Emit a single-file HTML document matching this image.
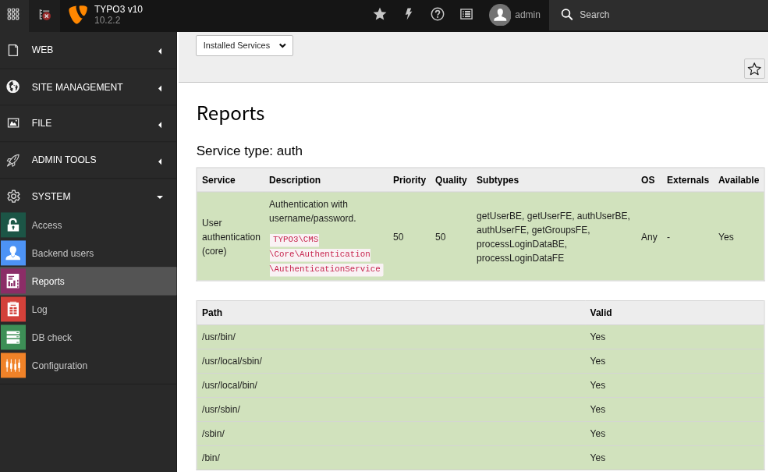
<!DOCTYPE html>
<html lang="en">
<head>
<meta charset="utf-8">
<title>TYPO3 CMS - Reports</title>
<style>
*{box-sizing:border-box;margin:0;padding:0}
html,body{width:768px;height:472px;overflow:hidden;background:#fff}
#page{background:#151515;position:absolute;left:0;top:0;width:984.62px;height:605.13px;transform:scale(0.78);transform-origin:0 0;overflow:hidden;will-change:transform}
body{font-family:"Liberation Sans",Arial,sans-serif;font-size:12px;color:#000;position:relative;line-height:1.5}
.abs{position:absolute}
/* topbar */
#topbar{z-index:2;position:absolute;left:0;top:0;width:984.62px;height:40.6px;background:#151515}
#topbar svg{position:absolute}
.ti{width:18px;height:18px}
#logo{left:85.2px;top:4.1px;width:29.84px;height:29.84px}
#avatar{left:626.7px;top:4.8px;width:28.6px;height:28.6px}
#tb1{position:absolute;left:0;top:0;width:37.4px;height:40.6px;background:#292929}
#tb2{position:absolute;left:37.4px;top:0;width:39.8px;height:40.6px;background:#1e1e1e}
#site{position:absolute;left:121px;top:4.66px;color:#fff;font-size:12px;line-height:14.4px;white-space:nowrap}
#site .ver{color:#8c8c8c;display:block}
#search{position:absolute;left:704px;top:0;width:281px;height:38.9px;background:#2d2d2d}
#search span{position:absolute;left:39.3px;top:9.5px;color:#cfcfcf;font-size:12px;line-height:18px}
#admin{position:absolute;left:660.25px;top:9.8px;color:#a5a5a5;font-size:12px;line-height:18px}
/* sidebar */
#side{box-shadow:0.45px 0 0 #292929;position:absolute;left:0;top:40px;width:225.76px;height:565.38px;background:#292929}
.grp{position:absolute;left:0;width:225.76px;height:47px;border-top:1px solid #202020;color:#fff;font-size:12.1px}
.gi{position:absolute;left:9.2px;top:15.6px;width:16px;height:16px}
.grp .lbl{position:absolute;left:40.78px;top:14.3px;line-height:18px;white-space:nowrap}
.sub{position:absolute;left:0;width:225.76px;height:36px;color:#c6c6c6;font-size:12px}
.sub .lbl{position:absolute;left:40.78px;top:9.7px;line-height:18px;white-space:nowrap}
.sub .ic{position:absolute;left:1.3px;top:2px;width:32.1px;height:32.1px}
.sub .ic svg{position:absolute;left:0;top:0;width:100%;height:100%}
.ic0{background:#1c5546}.ic1{background:#4d93f5}.ic2{background:#8b2d67}.ic3{background:#d3413a}.ic4{background:#3d8f56}.ic5{background:#f08228}
.sub.act{background:#545454;color:#fff;box-shadow:0.45px 0 0 #545454}
.caretl{position:absolute;left:203.02px;top:20.6px;width:0;height:0;border-top:4.1px solid transparent;border-bottom:4.1px solid transparent;border-right:4.6px solid #fff}
.caretd{position:absolute;left:201.13px;top:22.3px;width:0;height:0;border-left:4.3px solid transparent;border-right:4.3px solid transparent;border-top:4.5px solid #fff}
/* content */
#content{position:absolute;left:227px;top:41px;width:757.7px;height:565.38px;background:#fff}
#doch{position:absolute;left:2px;top:0;right:0;height:65px;background:#eee;border-bottom:1px solid #c3c3c3}
#sel svg{position:absolute;left:104.6px;top:6.8px;width:10.6px;height:10.6px}
#sel{position:absolute;left:22.26px;top:3.9px;width:124.35px;height:26.9px;padding-top:1.25px;background:#fff;border:1px solid #bbb;border-radius:2.06px;font-size:10.9px;line-height:23.14px;padding-left:8.5px;color:#222}
#starbtn{position:absolute;left:725px;top:33.9px;width:26.8px;height:26px;background:#eee;border:1px solid #c8c8c8;border-radius:2px}
#starbtn svg{position:absolute;left:2.8px;top:2.7px;width:18.4px;height:18.4px}
h1{position:absolute;left:24.65px;top:84.62px;font-family:"Noto Sans CJK SC","Liberation Sans",sans-serif;font-weight:400;font-size:24.2px;line-height:35.9px;color:#000;white-space:nowrap}
h2{position:absolute;left:24.65px;top:141.03px;font-weight:400;font-size:17.05px;line-height:23.14px;color:#000;white-space:nowrap}
table{transform:translate(0.5px,0);position:absolute;border-collapse:collapse;font-size:12px;line-height:18px;color:#000}
th{text-align:left;font-weight:700;white-space:nowrap}
td,th{padding:6px 5.4px 6px 6.6px;vertical-align:middle;border-top:1px solid #d4d4d4}
table{border:1px solid #d0d0d0;border-collapse:separate;border-spacing:0;border-top:0}
table{background:linear-gradient(#ededed 0,#ededed 31px,#d1e2bd 31px,#d1e2bd 100%)}
td{color:#1c1c1c}
td p{margin:0 0 9px 0}
td p.last{margin:0;white-space:nowrap}
.nw{white-space:nowrap}
code{font-family:"Liberation Mono",monospace;font-size:10.8px;color:#c7254e;background:#f9f2f4;padding:1.8px 4px 2.9px;margin-left:0.9px;border-radius:2px;line-height:18px}
</style>
</head>
<body>
<div id="page">
<div id="topbar">
  <div id="tb1"><svg viewBox="0 0 16 16" style="left:9.1px;top:10.1px;width:16px;height:16px"><g fill="none" stroke="#dadada" stroke-width="1.15"><rect x="1.20" y="1.20" width="3.2" height="3.2" rx="0.7"/><rect x="6.40" y="1.20" width="3.2" height="3.2" rx="0.7"/><rect x="11.60" y="1.20" width="3.2" height="3.2" rx="0.7"/><rect x="1.20" y="6.40" width="3.2" height="3.2" rx="0.7"/><rect x="6.40" y="6.40" width="3.2" height="3.2" rx="0.7"/><rect x="11.60" y="6.40" width="3.2" height="3.2" rx="0.7"/><rect x="1.20" y="11.60" width="3.2" height="3.2" rx="0.7"/><rect x="6.40" y="11.60" width="3.2" height="3.2" rx="0.7"/><rect x="11.60" y="11.60" width="3.2" height="3.2" rx="0.7"/></g></svg></div>
  <div id="tb2"><svg viewBox="0 0 20 20" style="left:9.5px;top:8.5px;width:20px;height:20px"><g stroke="#b4b4b4" stroke-width="1.3" fill="none"><path d="M4.4 3 V15.6"/><path d="M4.4 4.4 H7 M4.4 8 H7 M4.4 11.6 H7 M4.4 15 H7"/></g><rect x="8.2" y="4.3" width="8" height="2" fill="#8c8c8c"/><circle cx="12.7" cy="11.6" r="5.3" fill="#982b2b"/><path d="M10.6 9.5 L14.8 13.7 M14.8 9.5 L10.6 13.7" stroke="#dcdcdc" stroke-width="1.5" fill="none"/></svg></div>
  <svg id="logo" viewBox="0 0 16 16"><path fill="#ff8700" d="M11.1 10.3c-.2 0-.3.1-.5.1-1.600 0-3.900-5.500-3.900-7.400 0-.7.200-.9.400-1.100-2 .2-4.300.9-5 1.800-.2.300-.3.600-.3 1.100C1.800 7.700 5 14.200 7.200 14.200c1 0 2.800-1.700 3.900-3.900M10.300 1.800c2 0 4.100.3 4.100 1.500 0 2.400-1.500 5.400-2.300 5.400-1.400 0-3.200-3.900-3.200-5.900 0-.9.300-1 1.400-1"/></svg>
  <div id="site">TYPO3 v10<span class="ver">10.2.2</span></div>
  <svg class="ti" viewBox="0 0 18 18" style="left:477.8px;top:9.3px"><polygon points="9.00,0.50 11.35,6.16 17.46,6.65 12.80,10.64 14.23,16.60 9.00,13.40 3.77,16.60 5.20,10.64 0.54,6.65 6.65,6.16" fill="#c6c6c6"/></svg>
  <svg class="ti" viewBox="0 0 18 18" style="left:515px;top:9.2px"><path d="M7.6 1.6 L12.2 1.6 L10.4 6.2 L13.4 5.6 L6.6 16.6 L8.2 9.2 L4.8 10 Z" fill="#c6c6c6"/></svg>
  <svg class="ti" viewBox="0 0 18 18" style="left:552px;top:9.1px"><circle cx="9" cy="9" r="7.7" fill="none" stroke="#c6c6c6" stroke-width="1.5"/><path d="M6.6 7.2 C6.6 5.4 7.6 4.6 9.1 4.6 C10.6 4.6 11.5 5.5 11.5 6.8 C11.5 8.6 9.1 8.6 9.1 10.8" fill="none" stroke="#c6c6c6" stroke-width="1.7"/><rect x="8.2" y="12" width="1.8" height="1.8" fill="#c6c6c6"/></svg>
  <svg class="ti" viewBox="0 0 18 18" style="left:589.2px;top:8.95px"><rect x="1.9" y="2.9" width="14.2" height="12.2" fill="none" stroke="#c6c6c6" stroke-width="1.4"/><g fill="#c6c6c6"><rect x="4.2" y="5.2" width="1.5" height="1.6"/><rect x="4.2" y="8.2" width="1.5" height="1.6"/><rect x="4.2" y="11.2" width="1.5" height="1.6"/><rect x="7" y="5" width="7" height="2.1"/><rect x="7" y="8" width="7" height="2.1"/><rect x="7" y="11" width="7" height="2.1"/></g></svg>
  <svg id="avatar" viewBox="0 0 32 32"><circle cx="16" cy="16" r="16" fill="#737373"/><path d="M16 6.8 C13.2 6.8 12 8.8 12 11.6 C12 13.6 12.8 15.4 13.9 16.4 L13.7 18.2 C11.4 19 8.6 19.8 7.6 21.2 C7.1 22 7 23.2 7 24.4 L25 24.4 C25 23.2 24.9 22 24.4 21.2 C23.4 19.800 20.600 19 18.300 18.200 L18.100 16.400 C19.200 15.400 20 13.600 20 11.600 C20 8.800 18.800 6.800 16 6.800 Z" fill="#fff"/></svg>
  <div id="admin">admin</div>
  <div id="search"><svg viewBox="0 0 20 20" style="position:absolute;left:12.2px;top:7.2px;width:20px;height:20px"><circle cx="9.5" cy="10" r="4.9" fill="none" stroke="#fff" stroke-width="1.7"/><path d="M13.1 13.6 L17.2 17.700" stroke="#fff" stroke-width="2" stroke-linecap="round"/></svg><span>Search</span></div>
</div>
<div id="side">
  <div class="grp" style="top:0;transform:translateY(0.63px);border-top:0"><svg class="gi" viewBox="0 0 16 16"><path d="M2.4 0.9 H11.1 L13.4 3.2 V14.7 H2.4 Z" fill="none" stroke="#dcdcdc" stroke-width="1.35" stroke-linejoin="round"/><path d="M10.7 1.1 V3.6 H13.2" fill="none" stroke="#dcdcdc" stroke-width="1.1"/></svg><span class="lbl">WEB</span><i class="caretl"></i></div>
  <div class="grp" style="top:0;transform:translateY(47.50px)"><svg class="gi" viewBox="0 0 16 16" style="left:8.1px;top:14.05px;width:17.2px;height:17.2px"><circle cx="8" cy="8" r="7.7" fill="#f4f4f4"/><path d="M6.6 1.6 C4.6 2.6 3.2 4.4 3.4 6.2 L4.6 6.8 L3.8 8.4 L5 10 L4.6 11.6 L6.4 13.6 L7.6 13.4 L7.2 11.8 L8.4 10.8 L7 9.6 L5.8 9.4 L5.6 7.6 L6.8 6 L8.2 5.8 L8.6 4.4 L7.4 3.6 L8 2.2 Z" fill="#292929"/><path d="M12.4 5.6 L13.8 8.2 L12.6 11.4 L11 13 L11.4 10.4 L10.6 8.6 L11.6 7.6 Z" fill="#292929"/><path d="M8.8 6.2 L11 6.6 L10.8 7.2 L8.8 7 Z" fill="#292929"/></svg><span class="lbl">SITE MANAGEMENT</span><i class="caretl"></i></div>
  <div class="grp" style="top:0;transform:translateY(94.37px)"><svg class="gi" viewBox="0 0 16 16" style="top:14.3px"><rect x="1.5" y="2.7" width="13.2" height="10.8" fill="none" stroke="#e0e0e0" stroke-width="1.3"/><path d="M3.4 11.6 L5.4 6.8 L6.6 6.2 L8 9.2 L9.4 8 L10.6 8.4 L12.4 11.6 Z" fill="#fff"/><circle cx="11.8" cy="5.400" r="0.900" fill="#fff"/></svg><span class="lbl">FILE</span><i class="caretl"></i></div>
  <div class="grp" style="top:0;transform:translateY(141.24px)"><svg class="gi" viewBox="0 0 16 16" style="left:8.3px;top:14.5px;width:17.2px;height:17.2px"><g fill="none" stroke="#d0d0d0" stroke-width="1.05" stroke-linejoin="round" stroke-linecap="round"><path d="M15 1 C11.5 1.2 8.2 3 5.6 6.6 L4 9.4 L6.6 12 L9.4 10.4 C13 7.8 14.8 4.5 15 1 Z"/><path d="M6.2 6 L2.6 6 L1.2 8.4 L4.2 9"/><path d="M10 9.8 L10 13.4 L7.6 14.8 L7 11.8"/><path d="M4.2 10.4 L1.4 14.6 L5.6 11.8"/><path d="M11.6 3.2 L10 7"/></g></svg><span class="lbl">ADMIN TOOLS</span><i class="caretl"></i></div>
  <div class="grp" style="top:0;transform:translateY(188.11px)"><svg class="gi" viewBox="0 0 16 16" style="left:8.75px;top:14.3px;width:17px;height:17px"><path d="M6.41 0.88 L9.59 0.88 L9.90 3.05 L11.34 3.88 L13.37 3.06 L14.97 5.82 L13.23 7.17 L13.23 8.83 L14.97 10.18 L13.37 12.94 L11.34 12.12 L9.90 12.95 L9.59 15.12 L6.41 15.12 L6.10 12.95 L4.66 12.12 L2.63 12.94 L1.03 10.18 L2.77 8.83 L2.77 7.17 L1.03 5.82 L2.63 3.06 L4.66 3.88 L6.10 3.05Z" fill="none" stroke="#dcdcdc" stroke-width="1.25" stroke-linejoin="round"/><circle cx="8" cy="8" r="2.6" fill="none" stroke="#dcdcdc" stroke-width="1.25"/></svg><span class="lbl">SYSTEM</span><i class="caretd"></i></div>
  <div class="sub" style="top:0;transform:translateY(230.40px)"><span class="ic ic0"><svg viewBox="0 0 32 32"><path d="M11.6 15.5 V12.4 C11.6 9.6 13.4 8.500 15.500 8.500 C17.600 8.500 19.400 9.600 19.400 12.400 V13" fill="none" stroke="#fff" stroke-width="2.3"/><rect x="8.700" y="15.300" width="14.400" height="8.800" fill="#fff"/><circle cx="16" cy="18.600" r="1.600" fill="#1c5546"/><path d="M15 19 L17 19 L16.500 22 L15.500 22 Z" fill="#1c5546"/></svg></span><span class="lbl">Access</span></div>
  <div class="sub" style="top:0;transform:translateY(266.40px)"><span class="ic ic1"><svg viewBox="0 0 32 32"><path d="M15.7 7 C12.900 7 11.500 9 11.500 11.600 C11.500 13.600 12.300 15.300 13.500 16.400 L13.300 18.400 C11 19.200 8 20 7 21.500 C6.500 22.300 6.400 23.600 6.400 24.800 L24.900 24.800 C24.900 23.600 24.800 22.300 24.300 21.500 C23.300 20 20.300 19.200 18 18.400 L17.800 16.400 C19 15.300 19.900 13.600 19.900 11.600 C19.900 9 18.500 7 15.700 7 Z" fill="#fff"/><path d="M13.300 19.200 L15.700 21.400 L18 19.200" fill="none" stroke="#4d93f5" stroke-width="0.900"/></svg></span><span class="lbl">Backend users</span></div>
  <div class="sub act" style="top:0;transform:translateY(302.40px)"><span class="ic ic2"><svg viewBox="0 0 32 32"><rect x="7.600" y="6.600" width="15.700" height="18.300" fill="#fff"/><g fill="#8b2d67"><rect x="9.600" y="9.300" width="7.400" height="1.200"/><rect x="9.600" y="11.300" width="5.400" height="1.100"/><rect x="9.600" y="13.100" width="5.400" height="1.100"/><rect x="9.600" y="16.200" width="2.300" height="6.400"/><rect x="12.900" y="18.600" width="2.300" height="4"/><rect x="16.200" y="15.200" width="2.300" height="7.400"/><rect x="21" y="14.400" width="1.500" height="2.400"/><rect x="21" y="18.200" width="1.500" height="2.400"/><rect x="21" y="22" width="1.500" height="2.400"/></g></svg></span><span class="lbl">Reports</span></div>
  <div class="sub" style="top:0;transform:translateY(338.40px)"><span class="ic ic3"><svg viewBox="0 0 32 32"><rect x="8.700" y="7.400" width="14.200" height="17.500" fill="#fff"/><rect x="11.800" y="6.300" width="8.200" height="2.200" fill="#f6d6d4"/><g fill="#d3413a"><rect x="12.600" y="10.300" width="6.500" height="1.100"/><rect x="11.400" y="13.400" width="3.900" height="2.400"/><rect x="16.500" y="13.400" width="3.900" height="2.400"/><rect x="11.400" y="16.700" width="3.900" height="2.400"/><rect x="16.500" y="16.700" width="3.900" height="2.400"/><rect x="11.400" y="20" width="3.900" height="2.400"/><rect x="16.500" y="20" width="3.900" height="2.400"/></g></svg></span><span class="lbl">Log</span></div>
  <div class="sub" style="top:0;transform:translateY(374.40px)"><span class="ic ic4"><svg viewBox="0 0 32 32"><g fill="#fff"><rect x="7.600" y="8.100" width="16.500" height="3.900"/><rect x="7.600" y="13.500" width="16.500" height="3.500"/><rect x="7.600" y="18.500" width="16.500" height="5.700"/></g><g fill="#3d8f56"><rect x="20.200" y="9.400" width="2.600" height="1.100"/><rect x="20.200" y="14.800" width="2.600" height="1.100"/><rect x="20.200" y="21.900" width="2.600" height="1.100"/></g></svg></span><span class="lbl">DB check</span></div>
  <div class="sub" style="top:0;transform:translateY(410.40px)"><span class="ic ic5"><svg viewBox="0 0 32 32"><g fill="#fff"><rect x="7.600" y="8.100" width="1" height="16.100"/><rect x="12.800" y="8.100" width="1" height="16.100"/><rect x="18.100" y="8.100" width="1" height="16.100"/><rect x="23" y="8.100" width="1" height="16.100"/><rect x="6.800" y="11.200" width="2.600" height="7.400"/><rect x="12" y="13.300" width="2.600" height="7"/><rect x="17.300" y="14.200" width="2.600" height="7.200"/><rect x="22.200" y="12.500" width="2.600" height="6.900"/></g></svg></span><span class="lbl">Configuration</span></div>
  <div style="position:absolute;left:0;top:0;transform:translateY(451.9px);width:225.76px;height:1px;background:#202020"></div>
</div>
<div id="content">
  <div id="doch">
    <div id="sel">Installed Services<svg viewBox="0 0 10 10"><path d="M1.6 3.2 L5 6.6 L8.4 3.2" fill="none" stroke="#111" stroke-width="2"/></svg></div>
    <div id="starbtn"><svg viewBox="0 0 16 16"><polygon points="8.00,1.50 9.94,6.03 14.85,6.48 11.14,9.72 12.23,14.52 8.00,12.00 3.77,14.52 4.86,9.72 1.15,6.48 6.06,6.03" fill="none" stroke="#1a1a1a" stroke-width="1.0" stroke-linejoin="round"/></svg></div>
  </div>
  <h1>Reports</h1>
  <h2>Service type: auth</h2>
  <table id="t1" style="transform:translate(0.5px,0.5px);left:24px;top:173px;width:729px;table-layout:fixed">
    <colgroup><col style="width:86px"><col style="width:159px"><col style="width:54px"><col style="width:53px"><col style="width:211px"><col style="width:33px"><col style="width:66px"><col style="width:65px"></colgroup>
    <thead><tr><th>Service</th><th>Description</th><th>Priority</th><th>Quality</th><th>Subtypes</th><th>OS</th><th>Externals</th><th>Available</th></tr></thead>
    <tbody><tr class="ok">
      <td class="nw">User<br>authentication<br>(core)</td>
      <td style="padding-bottom:5px"><p class="nw">Authentication with<br>username/password.</p><p class="last"><code>TYPO3\CMS<br>\Core\Authentication<br>\AuthenticationService</code></p></td>
      <td>50</td><td>50</td>
      <td class="nw">getUserBE, getUserFE, authUserBE,<br>authUserFE, getGroupsFE,<br>processLoginDataBE,<br>processLoginDataFE</td>
      <td>Any</td><td>-</td><td>Yes</td>
    </tr></tbody>
  </table>
  <table id="t2" style="left:24px;top:344px;width:729px;table-layout:fixed">
    <colgroup><col style="width:497.5px"><col style="width:229.5px"></colgroup>
    <thead><tr><th>Path</th><th>Valid</th></tr></thead>
    <tbody>
      <tr class="ok"><td>/usr/bin/</td><td>Yes</td></tr>
      <tr class="ok"><td>/usr/local/sbin/</td><td>Yes</td></tr>
      <tr class="ok"><td>/usr/local/bin/</td><td>Yes</td></tr>
      <tr class="ok"><td>/usr/sbin/</td><td>Yes</td></tr>
      <tr class="ok"><td>/sbin/</td><td>Yes</td></tr>
      <tr class="ok"><td>/bin/</td><td>Yes</td></tr>
    </tbody>
  </table>
</div>
</div>
</body>
</html>
